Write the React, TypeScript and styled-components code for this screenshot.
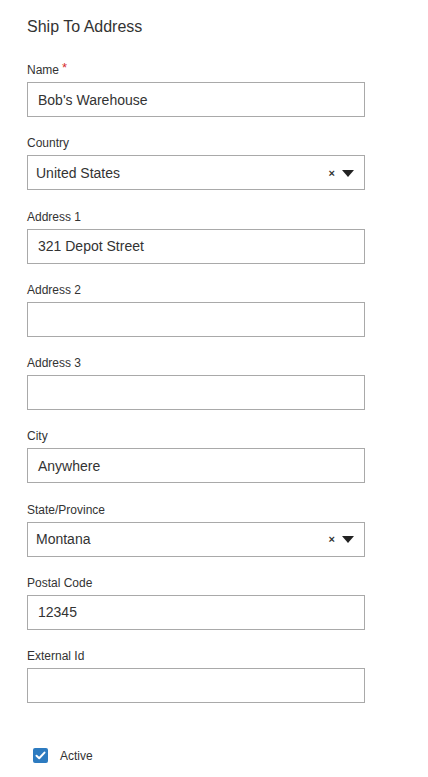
import React from "react";
import styled, { createGlobalStyle } from "styled-components";

const Global = createGlobalStyle`
  html, body { margin: 0; padding: 0; background: #fff; }
  body { font-family: "Liberation Sans", Arial, sans-serif; color: #333; }
`;

const Page = styled.div`
  padding: 17px 0 0 27px;
  width: 338px;
`;

const Title = styled.h2`
  margin: 0 0 26px 0;
  font-size: 16px;
  line-height: 20px;
  font-weight: normal;
  color: #333;
`;

const Field = styled.div`
  margin-bottom: 19.25px;
`;

const Label = styled.label`
  display: block;
  font-size: 12px;
  line-height: 14px;
  color: #333;
  margin-bottom: 5px;
`;

const Req = styled.span`
  color: #d62c2c;
  margin-left: 3px;
  font-size: 13px;
  position: relative;
  top: -2px;
`;

const Box = styled.div`
  box-sizing: border-box;
  height: 35px;
  border: 1px solid #a9a9a9;
  display: flex;
  align-items: center;
  padding: 0 10px;
  font-size: 14px;
  color: #333;
`;

const SelectBox = styled(Box)`
  padding: 0 10px 0 8px;
  justify-content: space-between;
`;

const Controls = styled.div`
  display: flex;
  align-items: center;
  gap: 7px;
`;

const Clear = styled.span`
  font-size: 11px;
  color: #333;
  font-weight: bold;
`;

const Caret = styled.span`
  width: 0;
  height: 0;
  border-left: 6.5px solid transparent;
  border-right: 6.5px solid transparent;
  border-top: 7px solid #222;
  margin-top: 1px;
`;

const CheckRow = styled.div`
  display: flex;
  align-items: center;
  margin-top: 45px;
  padding-left: 6px;
  gap: 12px;
  font-size: 12px;
  color: #333;
`;

const Check = styled.span`
  width: 15px;
  height: 15px;
  border-radius: 2px;
  background: #2d7bc0;
  display: flex;
  align-items: center;
  justify-content: center;
`;

type F = { label: string; value?: string; select?: boolean; required?: boolean };

const fields: F[] = [
  { label: "Name", value: "Bob's Warehouse", required: true },
  { label: "Country", value: "United States", select: true },
  { label: "Address 1", value: "321 Depot Street" },
  { label: "Address 2" },
  { label: "Address 3" },
  { label: "City", value: "Anywhere" },
  { label: "State/Province", value: "Montana", select: true },
  { label: "Postal Code", value: "12345" },
  { label: "External Id" },
];

export default function App() {
  return (
    <Page>
      <Global />
      <Title>Ship To Address</Title>
      {fields.map((f) => (
        <Field key={f.label}>
          <Label>
            {f.label}
            {f.required && <Req>*</Req>}
          </Label>
          {f.select ? (
            <SelectBox>
              <span>{f.value}</span>
              <Controls>
                <Clear>×</Clear>
                <Caret />
              </Controls>
            </SelectBox>
          ) : (
            <Box>{f.value}</Box>
          )}
        </Field>
      ))}
      <CheckRow>
        <Check>
          <svg width="11" height="9" viewBox="0 0 11 9">
            <path d="M1.5 4.8 L4.2 7.3 L9.5 1.6" stroke="#fff" strokeWidth="2" fill="none" strokeLinecap="round" strokeLinejoin="round" />
          </svg>
        </Check>
        <span>Active</span>
      </CheckRow>
    </Page>
  );
}
